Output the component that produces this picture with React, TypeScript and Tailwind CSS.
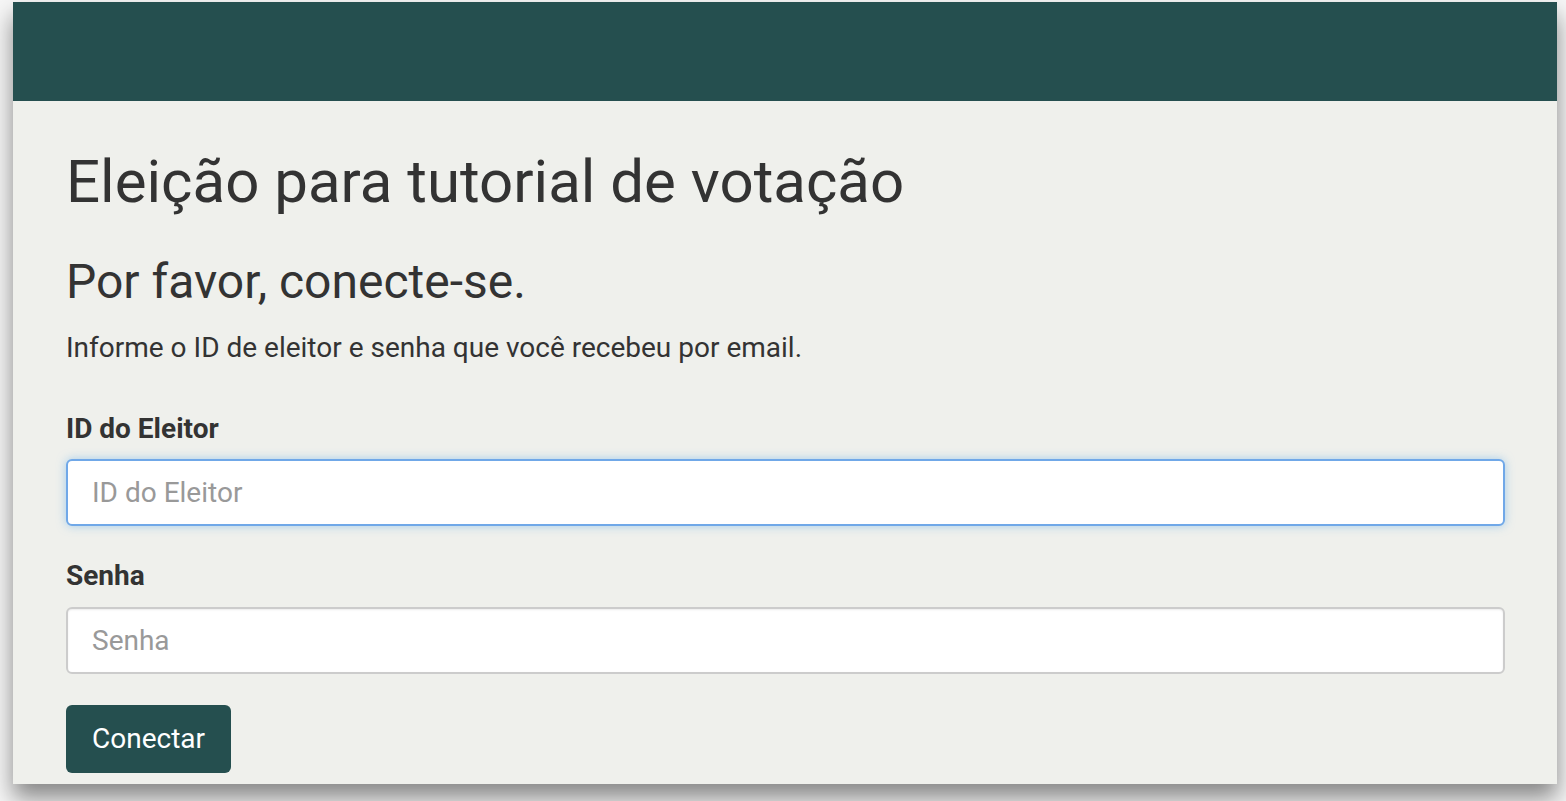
export default function App() {
    return (
        <div className="w-[1566px] h-[801px] bg-[#f6f6f6] overflow-hidden pt-[2px] pl-[13px] font-['Roboto',sans-serif] text-[#333333]">
            <div className="w-[1544px] h-[782px] bg-[#eff0ec] shadow-[0_14px_22px_rgba(0,0,0,0.45)] overflow-hidden">
                <div className="h-[99px] bg-[#254f4f]"></div>
                <div className="pl-[53px] pr-[52px] pt-[48px]">
                    <h1 className="text-[60px] leading-[66px] font-normal">
                        Eleição para tutorial de votação
                    </h1>
                    <h2 className="mt-[40px] text-[48px] leading-[53px] font-normal">
                        Por favor, conecte-se.
                    </h2>
                    <p className="mt-[20px] text-[28px] leading-[40px]">
                        Informe o ID de eleitor e senha que você recebeu por email.
                    </p>
                    <form className="mt-[41px]">
                        <label className="block text-[28px] leading-[40px] font-bold">
                            ID do Eleitor
                        </label>
                        <input
                            type="text"
                            placeholder="ID do Eleitor"
                            className="mt-[10px] block w-full h-[67px] px-[24px] bg-white border-2 border-[#70a8e8] rounded-[6px] text-[28px] placeholder:text-[#999999] outline-none shadow-[0_0_10px_rgba(102,175,233,0.55)]"
                        />
                        <label className="mt-[30px] block text-[28px] leading-[40px] font-bold">
                            Senha
                        </label>
                        <input
                            type="password"
                            placeholder="Senha"
                            className="mt-[11px] block w-full h-[67px] px-[24px] bg-white border-2 border-[#cccccc] rounded-[6px] text-[28px] placeholder:text-[#999999] outline-none shadow-[inset_0_1px_2px_rgba(0,0,0,0.08)]"
                        />
                        <button
                            type="button"
                            className="mt-[31px] w-[165px] h-[68px] bg-[#254f4f] text-white rounded-[6px] text-[28px]"
                        >
                            Conectar
                        </button>
                    </form>
                </div>
            </div>
        </div>
    );
}
